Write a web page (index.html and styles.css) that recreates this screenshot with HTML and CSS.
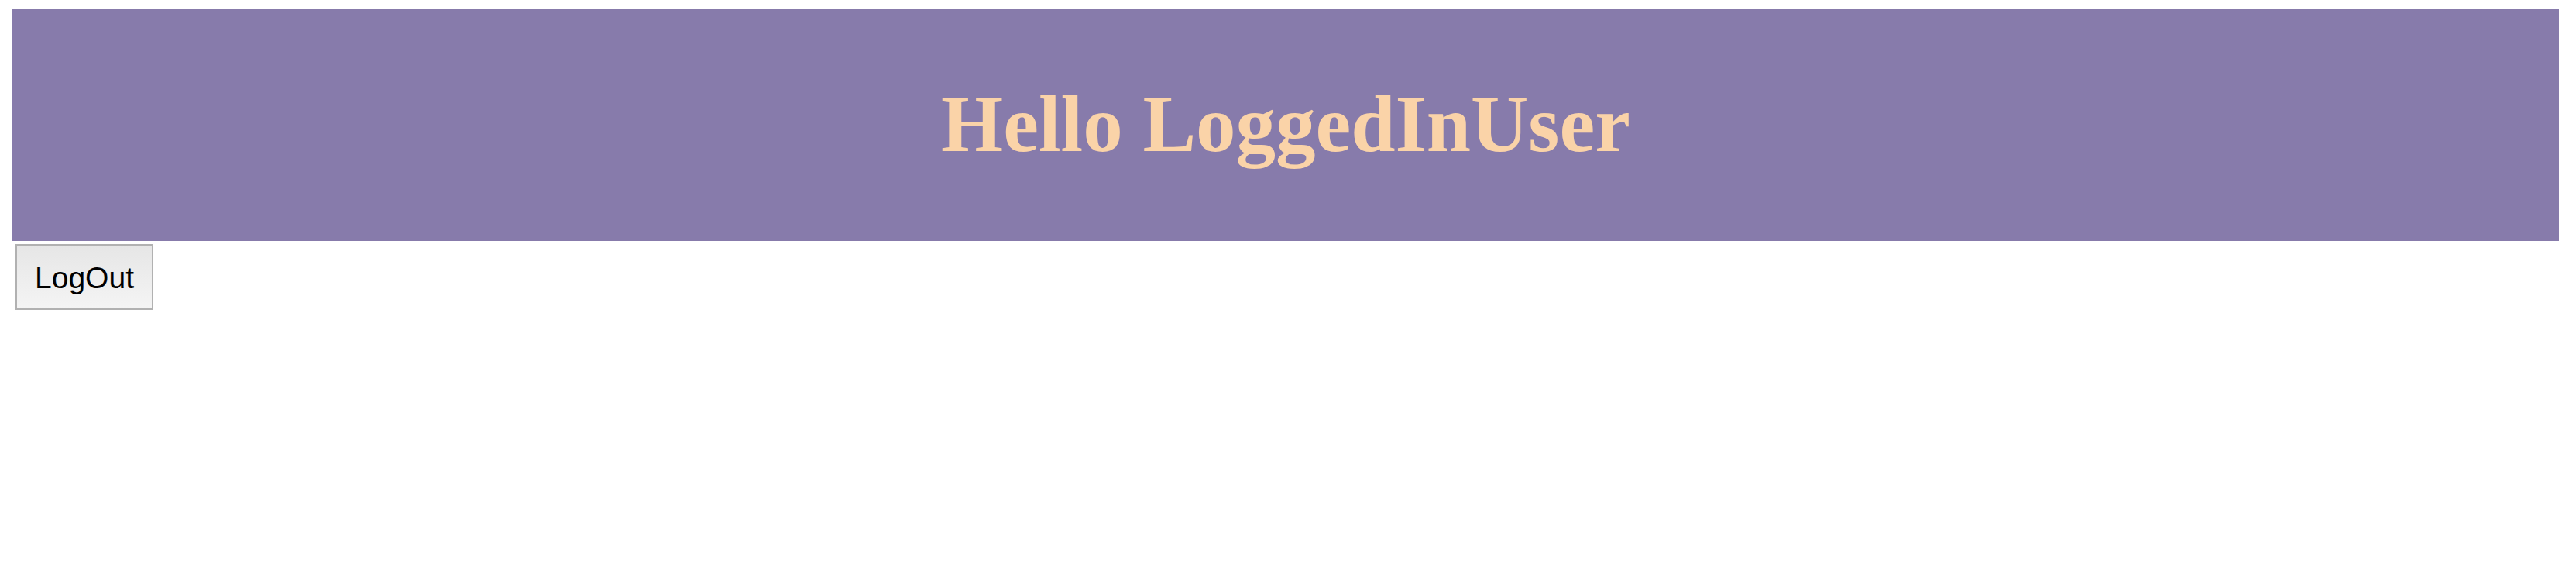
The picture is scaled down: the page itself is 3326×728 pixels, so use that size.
FILE: index.html
```html
<!DOCTYPE html>
<html>
<head>
<meta charset="utf-8">
<link rel="stylesheet" href="styles.css">
</head>
<body>
<div class="banner"><h1 class="greeting">Hello LoggedInUser</h1></div>
<button class="logout">LogOut</button>
</body>
</html>
```
FILE: styles.css
```css
html, body { background: #ffffff; }
body {
  margin: 12px 22px 0 16px;
  font-family: "Liberation Serif", "Times New Roman", serif;
}
.banner {
  height: 299px;
  background: #877bab;
  display: flex;
  align-items: center;
  justify-content: center;
}
.greeting {
  margin: 0;
  font-family: "Liberation Serif", "Times New Roman", serif;
  font-weight: bold;
  font-size: 103px;
  line-height: 1;
  color: #fad3a8;
  padding-bottom: 2px;
}
.logout {
  display: block;
  margin: 4px 0 0 4px;
  width: 178px;
  height: 85px;
  box-sizing: border-box;
  border: 2px solid #b1b1b1;
  border-radius: 0;
  background: linear-gradient(#e6e6e6, #f4f4f4);
  font-family: "Liberation Sans", Arial, sans-serif;
  font-size: 39px;
  color: #000;
  padding: 3px 0 0 0;
}
```
